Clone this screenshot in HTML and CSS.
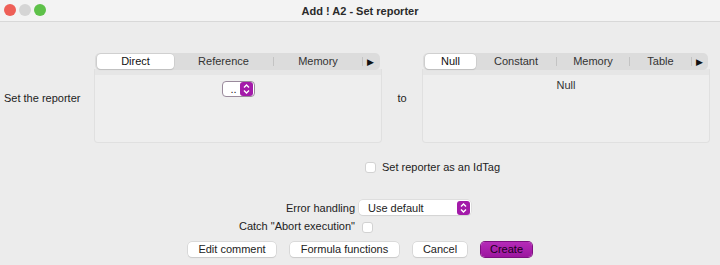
FILE: index.html
```html
<!DOCTYPE html>
<html>
<head>
  <meta charset="utf-8">
  <title>Add ! A2 - Set reporter</title>
  <link rel="stylesheet" href="styles.css">
</head>
<body>
  <div class="window">
    <div class="titlebar">
      <div class="lights">
        <span class="light red"></span>
        <span class="light gray"></span>
        <span class="light green"></span>
      </div>
      <div class="title">Add ! A2 - Set reporter</div>
    </div>

    <div class="reporter-row">
      <div class="row-label">Set the reporter</div>
      <div class="tabpanel">
        <div class="tabs">
          <span class="tab selected tab-direct">Direct</span>
          <span class="tab tab-reference">Reference</span>
          <span class="sep"></span>
          <span class="tab tab-memory">Memory</span>
          <span class="sep"></span>
          <span class="tab-more">&#9654;</span>
        </div>
        <div class="panel-body">
          <div class="spinner">
            <span class="spinner-text">..</span>
            <svg class="stepper" width="13" height="14" viewBox="0 0 13 14">
              <rect x="0" y="0" width="13" height="14" rx="3" fill="#a31aa9"/>
              <path d="M4 5.5 L6.5 3 L9 5.5 M4 8.5 L6.5 11 L9 8.5" stroke="#fff" stroke-width="1.4" fill="none"/>
            </svg>
          </div>
        </div>
      </div>
      <div class="to-label">to</div>
      <div class="tabpanel">
        <div class="tabs">
          <span class="tab selected tab-null">Null</span>
          <span class="tab tab-constant">Constant</span>
          <span class="sep"></span>
          <span class="tab tab-mem2">Memory</span>
          <span class="sep"></span>
          <span class="tab tab-table">Table</span>
          <span class="sep"></span>
          <span class="tab-more">&#9654;</span>
        </div>
        <div class="panel-body">
          <div class="null-text">Null</div>
        </div>
      </div>
    </div>

    <div class="idtag-row">
      <span class="checkbox"></span>
      <span>Set reporter as an IdTag</span>
    </div>

    <div class="options">
      <div class="opt-label">Error handling</div>
      <div class="select">
        <span class="select-text">Use default</span>
        <svg class="stepper" width="13" height="14" viewBox="0 0 13 14">
          <rect x="0" y="0" width="13" height="14" rx="3" fill="#a31aa9"/>
          <path d="M4 5.5 L6.5 3 L9 5.5 M4 8.5 L6.5 11 L9 8.5" stroke="#fff" stroke-width="1.4" fill="none"/>
        </svg>
      </div>
      <div class="opt-label">Catch "Abort execution"</div>
      <div><span class="checkbox catch-box"></span></div>
    </div>

    <div class="buttons">
      <button class="btn btn-edit">Edit comment</button>
      <button class="btn btn-formula">Formula functions</button>
      <button class="btn btn-cancel">Cancel</button>
      <button class="btn primary btn-create">Create</button>
    </div>
  </div>
</body>
</html>
```

FILE: styles.css
```css
* {
  box-sizing: border-box;
}

body {
  margin: 0;
  background: #ececec;
  font-family: "Liberation Sans", Arial, sans-serif;
  font-size: 11px;
  color: #222;
}

.window {
  width: 720px;
  height: 265px;
  overflow: hidden;
}

/* title bar */
.titlebar {
  position: relative;
  height: 22px;
  background: #f3f3f3;
  border-bottom: 1px solid #d8d8d8;
  display: flex;
  align-items: center;
  justify-content: center;
}

.lights {
  position: absolute;
  left: 4px;
  top: 4px;
  display: flex;
  gap: 3px;
}

.light {
  width: 12px;
  height: 12px;
  border-radius: 50%;
}

.red { background: #ee5f57; }
.gray { background: #d5d5d5; }
.green { background: #5ec149; }

.title {
  font-weight: bold;
  font-size: 11px;
  color: #2a2a2a;
}

/* reporter row */
.reporter-row {
  display: flex;
  align-items: center;
  margin-top: 31px;
  height: 90px;
}

.row-label {
  width: 94px;
  padding-left: 4px;
}

.to-label {
  width: 40px;
  text-align: center;
}

.tabpanel {
  width: 288px;
  height: 90px;
  display: flex;
  flex-direction: column;
}

.tabs {
  height: 17px;
  margin: 0 2px 0 1px;
  background: #dcdcdc;
  border-radius: 5px;
  display: flex;
  align-items: center;
  padding: 0 2px;
  position: relative;
  z-index: 1;
}

.tab {
  text-align: center;
  line-height: 15px;
  color: #333;
}

.tab.selected {
  background: #fff;
  border-radius: 4px;
  box-shadow: 0 0 0 0.5px #c4c4c4, 0 1px 1px rgba(0, 0, 0, 0.15);
  color: #111;
}

.sep {
  width: 1px;
  height: 9px;
  background: #c3c3c3;
}

.tab-more {
  flex: 1;
  text-align: center;
  font-size: 9px;
  color: #111;
}

.tab-direct { width: 77px; }
.tab-reference { width: 99px; }
.tab-memory { width: 88px; }

.tab-null { width: 51px; }
.tab-constant { width: 80px; }
.tab-mem2 { width: 72px; }
.tab-table { width: 61px; }

.panel-body {
  flex: 1;
  margin-top: -1px;
  border: 1px solid #e0e0e0;
  border-top: none;
  border-radius: 0 0 4px 4px;
  background: linear-gradient(#e6e6e6 0, #e6e6e6 6px, #eeeeee 6px);
  display: flex;
  flex-direction: column;
  align-items: center;
}

.spinner {
  margin-top: 12px;
  width: 33px;
  height: 16px;
  background: #fff;
  border: 1px solid #9a8a9c;
  border-radius: 4px;
  display: flex;
  align-items: center;
  justify-content: flex-end;
  padding-right: 1px;
}

.spinner-text {
  margin-right: 3px;
  line-height: 12px;
}

.null-text {
  margin-top: 10px;
  color: #333;
}

/* checkbox row */
.idtag-row {
  display: flex;
  align-items: center;
  gap: 6px;
  margin: 18px 0 0 365px;
  height: 12px;
}

.checkbox {
  display: inline-block;
  width: 11px;
  height: 11px;
  background: #fff;
  border: 1px solid #d2d2d2;
  border-radius: 3px;
}

/* error options */
.options {
  display: grid;
  grid-template-columns: 355px auto;
  column-gap: 4px;
  row-gap: 5px;
  align-items: center;
  margin-top: 27px;
}

.opt-label {
  text-align: right;
}

.select {
  width: 112px;
  height: 15px;
  background: #fff;
  border-radius: 4px;
  box-shadow: 0 0 0 0.5px #d0d0d0, 0 1px 1px rgba(0, 0, 0, 0.08);
  display: flex;
  align-items: center;
  justify-content: space-between;
  padding: 0 1px 0 9px;
}

.catch-box {
  margin-left: 3px;
  vertical-align: middle;
}

/* buttons */
.buttons {
  display: flex;
  justify-content: center;
  gap: 14px;
  margin-top: 9px;
}

.btn {
  font-family: inherit;
  font-size: 11px;
  height: 15px;
  padding: 0;
  background: #fff;
  color: #222;
  border: none;
  border-radius: 4px;
  box-shadow: 0 0 0 0.5px #c8c8c8, 0 1px 1px rgba(0, 0, 0, 0.12);
}

.btn-edit { width: 88px; }
.btn-formula { width: 109px; }
.btn-cancel { width: 54px; }
.btn-create { width: 51px; }

.btn.primary {
  background: linear-gradient(#b52bb8, #9c169f);
  box-shadow: 0 0 0 1px #7e1080;
  color: #1a001a;
}
```
